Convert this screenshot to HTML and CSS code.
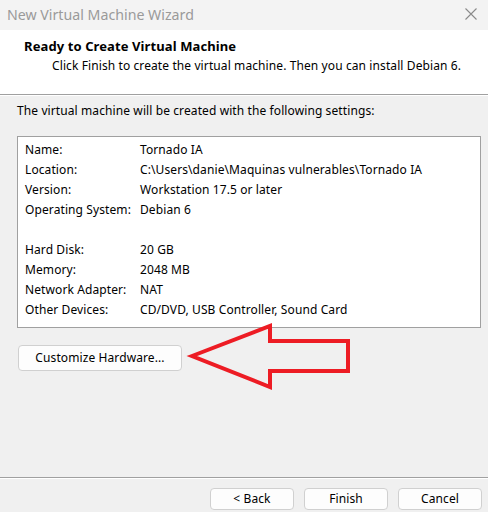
FILE: index.html
```html
<!DOCTYPE html>
<html>
<head>
<meta charset="utf-8">
<link rel="stylesheet" href="styles.css">
</head>
<body>
<div class="window">
  <div class="titlebar">
    <span class="title">New Virtual Machine Wizard</span>
    <svg class="close" width="12" height="12" viewBox="0 0 12 12"><path d="M0.5 0.5L11.5 11.5M11.5 0.5L0.5 11.5" stroke="#8a8a8a" stroke-width="1.1" fill="none"/></svg>
  </div>
  <div class="header">
    <div class="h-title">Ready to Create Virtual Machine</div>
    <div class="h-sub">Click Finish to create the virtual machine. Then you can install Debian 6.</div>
  </div>
  <div class="content">
    <div class="intro">The virtual machine will be created with the following settings:</div>
    <div class="box">
      <div class="row"><span class="k">Name:</span><span class="v">Tornado IA</span></div>
      <div class="row"><span class="k">Location:</span><span class="v">C:\Users\danie\Maquinas vulnerables\Tornado IA</span></div>
      <div class="row"><span class="k">Version:</span><span class="v">Workstation 17.5 or later</span></div>
      <div class="row"><span class="k">Operating System:</span><span class="v">Debian 6</span></div>
      <div class="row"></div>
      <div class="row"><span class="k">Hard Disk:</span><span class="v">20 GB</span></div>
      <div class="row"><span class="k">Memory:</span><span class="v">2048 MB</span></div>
      <div class="row"><span class="k">Network Adapter:</span><span class="v">NAT</span></div>
      <div class="row"><span class="k">Other Devices:</span><span class="v">CD/DVD, USB Controller, Sound Card</span></div>
    </div>
    <div class="custom-row">
      <button class="btn custom">Customize Hardware...</button>
    </div>
  </div>
  <div class="footer">
    <button class="btn nav">&lt; Back</button>
    <button class="btn nav">Finish</button>
    <button class="btn nav">Cancel</button>
  </div>
  <svg class="arrow" width="488" height="512" viewBox="0 0 488 512">
    <polygon points="192,356 270,326 270,341 348,341 348,371 270,371 270,387" fill="none" stroke="#ed1c24" stroke-width="4" stroke-linejoin="miter"/>
  </svg>
</div>
</body>
</html>
```

FILE: styles.css
```css
* { box-sizing: border-box; }
html, body { margin: 0; padding: 0; }
body {
  width: 488px;
  height: 512px;
  overflow: hidden;
  font-family: "Noto Sans", "Open Sans", sans-serif;
  font-size: 12px;
  letter-spacing: 0.1px;
  color: #000;
  background: #f0f0f0;
}
.window {
  position: relative;
  width: 488px;
  height: 512px;
  display: flex;
  flex-direction: column;
}
.titlebar {
  height: 30px;
  background: #f3f3f3;
  display: flex;
  align-items: center;
  justify-content: space-between;
  padding: 0 11px 1px 7px;
}
.title {
  font-size: 14.2px;
  color: #9a9a9a;
  letter-spacing: 0;
}
.close { margin-top: -2px; }
.header {
  height: 65px;
  background: #fff;
  border-bottom: 1px solid #a0a0a0;
  padding: 7px 0 0 24px;
}
.h-title {
  font-weight: bold;
  font-size: 13px;
  line-height: 18px;
}
.h-sub {
  padding-left: 28px;
  line-height: 18px;
  margin-top: 2px;
}
.content {
  flex: 1;
  border-top: 1px solid #fff;
  padding: 5px 7px 0 17px;
}
.intro { line-height: 20px; }
.box {
  margin-top: 15px;
  height: 192px;
  background: #fff;
  border: 1px solid #a0a0a0;
  padding: 3px 0 0 7px;
}
.row {
  display: flex;
  height: 20px;
  line-height: 20px;
}
.k { width: 115px; }
.custom-row { margin-top: 17px; }
.btn {
  font-family: inherit;
  font-size: 12px;
  letter-spacing: 0.1px;
  color: #000;
  background: #fdfdfd;
  border: 1px solid #d0d0d0;
  border-radius: 4px;
  padding: 0;
  line-height: 18px;
}
.custom {
  margin-left: 1px;
  width: 164px;
  height: 26px;
}
.footer {
  height: 35px;
  border-top: 1px solid #a0a0a0;
  box-shadow: inset 0 1px 0 #fff;
  display: flex;
  justify-content: flex-end;
  gap: 10px;
  padding: 10px 6px 0 0;
}
.nav {
  width: 84px;
  height: 22px;
}
.arrow {
  position: absolute;
  left: 0;
  top: 0;
  pointer-events: none;
}
```
